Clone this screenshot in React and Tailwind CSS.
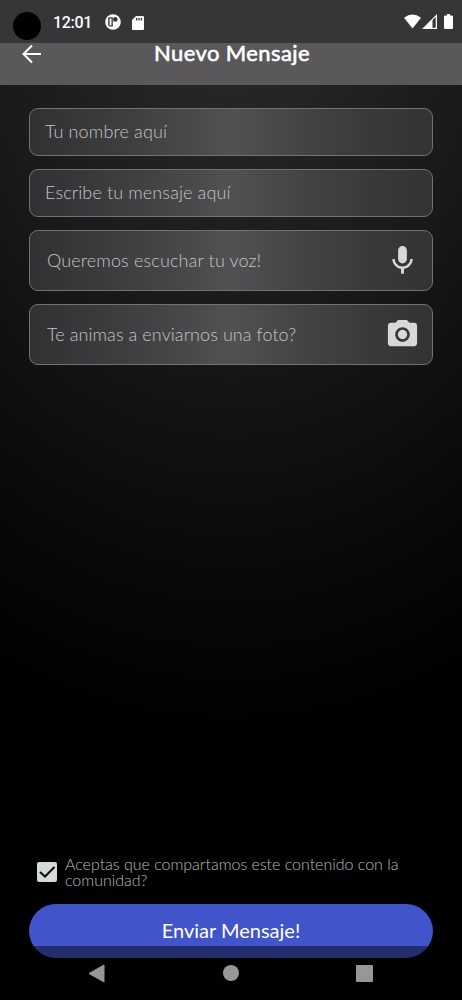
import { useState } from 'react';
import { MdCameraAlt, MdMic } from 'react-icons/md';

function StatusBar() {
  return (
    <div className="h-[43px] bg-[#373538] flex items-start justify-between text-white">
      <div className="flex items-center h-[28px] mt-[12px] pl-[13px]">
        <div className="w-[28px] h-[28px] rounded-full bg-black" />
        <span className="ml-[12px] w-[52px] -mt-[7px] font-['Roboto'] font-medium text-[16px] leading-[20px] tracking-[-0.3px]">
          12:01
        </span>
        <svg className="w-4 h-4 -mt-[8px]" viewBox="0 0 16 16">
          <circle cx="8" cy="8" r="7.8" fill="#fff" />
          <path d="M3.2 4.2q0-1 1-1h3.600v9.300H5q-1.800 0-1.800-2z" fill="#373538" />
          <path d="M4.600 4.400h1.900v7H4.600z" fill="#fff" />
          <circle cx="10.300" cy="5.400" r="2.300" fill="#373538" />
        </svg>
        <svg className="w-3 h-[14px] ml-[11px] -mt-[7px]" viewBox="0 0 12 14">
          <path d="M4 0h7q1 0 1 1v12q0 1-1 1H1q-1 0-1-1V4z" fill="#fff" />
          <path d="M4 2h1.300v2.400H4zM6.400 2h1.300v2.400H6.400zM8.800 2h1.300v2.400H8.800z" fill="#373538" />
        </svg>
      </div>
      <div className="flex items-center mt-[14px] pr-[9px]">
        <svg className="w-[17px] h-[15px]" viewBox="0 0 17 15">
          <path d="M0 3.800Q8.500-3 17 3.800L8.500 14.500z" fill="#fff" />
        </svg>
        <svg className="w-[15px] h-[15px] ml-[1px]" viewBox="0 0 15 15">
          <path d="M0 15 15 0v15zM10.500 6v7.700h3.200V3z" fill="#fff" fillRule="evenodd" />
        </svg>
        <svg className="w-[9px] h-[15px] ml-[7px]" viewBox="0 0 9 15">
          <path d="M3 0h3v1.500h2q1 0 1 1V14q0 1-1 1H1q-1 0-1-1V2.500q0-1 1-1h2z" fill="#fff" />
        </svg>
      </div>
    </div>
  );
}

function Header() {
  return (
    <header className="h-[42px] bg-[#5a585b] grid grid-cols-[154px_154px_154px] items-start text-white">
      <svg className="w-[20px] h-[20px] ml-[22px] mt-px" viewBox="0 0 20 20" fill="none" stroke="#fff" strokeWidth="2">
        <path d="M19 10H2M10 1.500 1.500 10 10 18.500" />
      </svg>
      <h1 className="text-center whitespace-nowrap font-['Lato'] font-normal text-[22px] leading-[20px] tracking-[0.4px] [-webkit-text-stroke:0.6px_#fff]">
        Nuevo Mensaje
      </h1>
    </header>
  );
}

const box =
  'border border-[#737173] rounded-[9px] bg-[linear-gradient(90deg,#313133_0%,#3b3a3c_18%,#454446_34%,#515052_50%,#454446_66%,#3b3a3c_82%,#333234_100%)]';

function Field({ placeholder, className }) {
  return (
    <input
      type="text"
      placeholder={placeholder}
      className={`${box} block w-full h-[48px] pl-[15px] pb-[2px] font-light text-[18px] outline-none text-[#c6c5c6] placeholder:text-[#c6c5c6] ${className}`}
    />
  );
}

function MediaButton({ label, icon: Icon, className }) {
  return (
    <button className={`${box} flex items-center justify-between w-full h-[61px] pl-[17px] pr-[12px]`}>
      <span className={`font-light text-[18px] text-[#c6c5c6] whitespace-nowrap ${className}`}>{label}</span>
      <Icon className="w-[35px] h-[35px] text-[#d5d9da]" />
    </button>
  );
}

function NavBar() {
  return (
    <nav className="absolute inset-x-0 bottom-0 h-[54px] bg-black/45 flex items-center justify-between pl-[88px] pr-[89px]">
      <svg className="w-[17px] h-[19px]" viewBox="0 0 17 19">
        <path d="M1 9.500 16 1v17z" fill="#999699" stroke="#999699" strokeLinejoin="round" />
      </svg>
      <div className="w-4 h-4 rounded-full bg-[#999699]" />
      <div className="w-[17px] h-[17px] rounded-[1px] bg-[#999699]" />
    </nav>
  );
}

function App() {
  const [accepted, setAccepted] = useState(true);

  return (
    <div className="relative w-[462px] h-[1000px] overflow-hidden flex flex-col bg-black bg-[radial-gradient(ellipse_600px_780px_at_50%_0,#2b292c_0%,#242326_17%,#1a191b_40%,#0d0c0e_65%,#020103_90%,#000_100%)] font-['Lato',sans-serif]">
      <StatusBar />
      <Header />
      <main className="flex-1 flex flex-col px-[29px] pt-[23px] pb-[42px]">
        <div className="flex flex-col gap-[13px]">
          <Field placeholder="Tu nombre aquí" className="tracking-[0.15px]" />
          <Field placeholder="Escribe tu mensaje aquí" className="tracking-[0.12px]" />
          <MediaButton label="Queremos escuchar tu voz!" icon={MdMic} className="tracking-[0.14px]" />
          <MediaButton label="Te animas a enviarnos una foto?" icon={MdCameraAlt} className="tracking-[0.08px]" />
        </div>
        <div className="mt-auto">
          <div className="flex items-center pl-2 mb-[16px]">
            <button
              onClick={() => setAccepted(!accepted)}
              className="w-[20px] h-[20px] shrink-0 rounded-[2px] bg-[#d5d9da]"
            >
              {accepted && (
                <svg className="w-[20px] h-[20px]" viewBox="0 0 20 20" fill="none" stroke="#0b0c0d" strokeWidth="2">
                  <path d="M3 10 8 14.500 17.500 5" />
                </svg>
              )}
            </button>
            <p className="ml-2 font-light text-[16px] leading-[16px] text-[#bcbbbc] tracking-[-0.02px]">
              Aceptas que compartamos este contenido con la
              <br />
              comunidad?
            </p>
          </div>
          <button className="w-full h-[54px] pb-[3px] rounded-full bg-[#4154c9] text-white text-[20px]">
            Enviar Mensaje!
          </button>
        </div>
      </main>
      <NavBar />
    </div>
  );
}

export default App;
